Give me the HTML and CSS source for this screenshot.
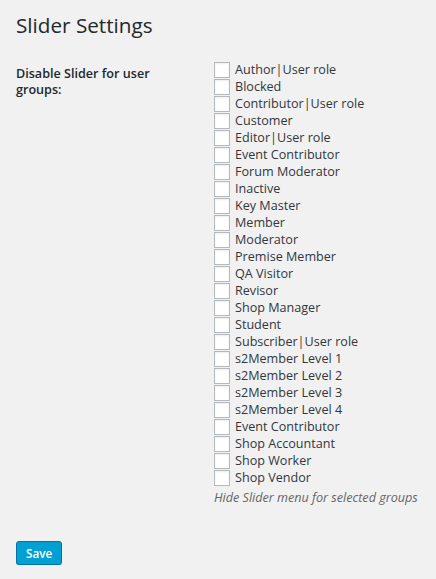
FILE: index.html
```
<!DOCTYPE html>
<html lang="en">
<head>
    <meta charset="UTF-8">
    <meta name="viewport" content="width=device-width, initial-scale=1.0">
    <title>Slider Settings</title>
    <link rel="stylesheet" href="styles.css">
</head>
<body>
    <div class="wrap">
        <h1>Slider Settings</h1>

        <form class="settings-form" onsubmit="return false;">
            <div class="form-row">
                <div class="form-label">Disable Slider for user groups:</div>
                <div class="form-field">
                    <label class="check"><input type="checkbox">Author|User role</label>
                    <label class="check"><input type="checkbox">Blocked</label>
                    <label class="check"><input type="checkbox">Contributor|User role</label>
                    <label class="check"><input type="checkbox">Customer</label>
                    <label class="check"><input type="checkbox">Editor|User role</label>
                    <label class="check"><input type="checkbox">Event Contributor</label>
                    <label class="check"><input type="checkbox">Forum Moderator</label>
                    <label class="check"><input type="checkbox">Inactive</label>
                    <label class="check"><input type="checkbox">Key Master</label>
                    <label class="check"><input type="checkbox">Member</label>
                    <label class="check"><input type="checkbox">Moderator</label>
                    <label class="check"><input type="checkbox">Premise Member</label>
                    <label class="check"><input type="checkbox">QA Visitor</label>
                    <label class="check"><input type="checkbox">Revisor</label>
                    <label class="check"><input type="checkbox">Shop Manager</label>
                    <label class="check"><input type="checkbox">Student</label>
                    <label class="check"><input type="checkbox">Subscriber|User role</label>
                    <label class="check"><input type="checkbox">s2Member Level 1</label>
                    <label class="check"><input type="checkbox">s2Member Level 2</label>
                    <label class="check"><input type="checkbox">s2Member Level 3</label>
                    <label class="check"><input type="checkbox">s2Member Level 4</label>
                    <label class="check"><input type="checkbox">Event Contributor</label>
                    <label class="check"><input type="checkbox">Shop Accountant</label>
                    <label class="check"><input type="checkbox">Shop Worker</label>
                    <label class="check"><input type="checkbox">Shop Vendor</label>
                    <p class="description">Hide Slider menu for selected groups</p>
                </div>
            </div>

            <button type="submit" class="button-primary">Save</button>
        </form>
    </div>
</body>
</html>
```

FILE: styles.css
```
html, body {
    margin: 0;
    padding: 0;
}
body {
    font-family: "Open Sans", "Liberation Sans", sans-serif;
    font-size: 12.6px;
    color: #32373c;
    background-color: #f1f1f1;
}
.wrap {
    padding: 0 16px;
}
h1 {
    font-size: 20.7px;
    font-weight: 400;
    line-height: 26px;
    color: #23282d;
    margin: 12px 0 0;
}
.settings-form {
    margin-top: 24px;
}
.form-row {
    display: grid;
    grid-template-columns: 198px 1fr;
}
.form-label {
    font-weight: 600;
    line-height: 16.3px;
    color: #23282d;
    padding: 4px 30px 0 0;
}
.form-field {
    display: flex;
    flex-direction: column;
}
.check {
    display: flex;
    align-items: flex-start;
    height: 17px;
    line-height: 16px;
}
.check input {
    appearance: none;
    -webkit-appearance: none;
    width: 16px;
    height: 16px;
    margin: 0 5px 0 0;
    border: 1px solid #b4b9be;
    background: #fff;
    box-shadow: inset 0 1px 2px rgba(0,0,0,0.07);
    flex: none;
}
.description {
    margin: 2px 0 0;
    font-size: 12.6px;
    font-style: italic;
    line-height: 17px;
    color: #666;
}
.button-primary {
    margin-top: 35px;
    height: 24px;
    padding: 0 9px;
    font-family: "Open Sans", "Liberation Sans", sans-serif;
    font-size: 11.7px;
    font-weight: 600;
    line-height: 22px;
    color: #fff;
    background: #00a0d2;
    border: 1px solid #0073aa;
    border-radius: 3px;
    box-shadow: 0 1px 0 #c7c7c7;
    cursor: pointer;
}
```
